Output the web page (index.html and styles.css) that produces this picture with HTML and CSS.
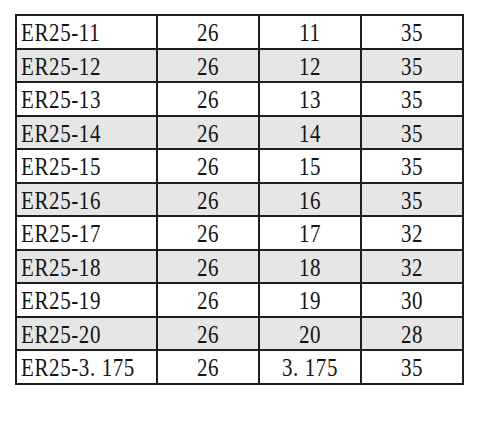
FILE: index.html
```html
<!DOCTYPE html>
<html lang="en">
<head>
<meta charset="utf-8">
<link rel="stylesheet" href="styles.css">
</head>
<body>
<table class="spec">
  <colgroup><col class="c1"><col class="cn"><col class="cn"><col class="cn"></colgroup>
  <tr><td><span>ER25-11</span></td><td><span>26</span></td><td><span>11</span></td><td><span>35</span></td></tr>
  <tr class="alt"><td><span>ER25-12</span></td><td><span>26</span></td><td><span>12</span></td><td><span>35</span></td></tr>
  <tr><td><span>ER25-13</span></td><td><span>26</span></td><td><span>13</span></td><td><span>35</span></td></tr>
  <tr class="alt"><td><span>ER25-14</span></td><td><span>26</span></td><td><span>14</span></td><td><span>35</span></td></tr>
  <tr><td><span>ER25-15</span></td><td><span>26</span></td><td><span>15</span></td><td><span>35</span></td></tr>
  <tr class="alt"><td><span>ER25-16</span></td><td><span>26</span></td><td><span>16</span></td><td><span>35</span></td></tr>
  <tr><td><span>ER25-17</span></td><td><span>26</span></td><td><span>17</span></td><td><span>32</span></td></tr>
  <tr class="alt"><td><span>ER25-18</span></td><td><span>26</span></td><td><span>18</span></td><td><span>32</span></td></tr>
  <tr><td><span>ER25-19</span></td><td><span>26</span></td><td><span>19</span></td><td><span>30</span></td></tr>
  <tr class="alt"><td><span>ER25-20</span></td><td><span>26</span></td><td><span>20</span></td><td><span>28</span></td></tr>
  <tr><td><span>ER25-3. 175</span></td><td><span>26</span></td><td><span>3. 175</span></td><td><span>35</span></td></tr>
</table>
</body>
</html>
```
FILE: styles.css
```css
html, body {
  margin: 0;
  padding: 0;
  background: #ffffff;
}
body {
  padding: 14px 0 0 15px;
}
.spec {
  border-collapse: collapse;
  table-layout: fixed;
  width: 449px;
  font-family: "Liberation Serif", "Times New Roman", serif;
  font-size: 21px;
  color: #141414;
}
.c1 { width: 141px; }
.cn { width: 102px; }
.spec td {
  border: 2px solid #1e1e1e;
  height: 33.5px;
  padding: 7px 0 0 0;
  box-sizing: border-box;
  text-align: center;
  vertical-align: top;
  line-height: 21px;
  white-space: nowrap;
}
.spec td span {
  display: inline-block;
  line-height: 21px;
  letter-spacing: 0.6px;
  transform: scaleY(1.15);
}
.spec td:first-child {
  text-align: left;
  padding-left: 4px;
}
.spec tr.alt td {
  background: #e6e6e6;
}
```
